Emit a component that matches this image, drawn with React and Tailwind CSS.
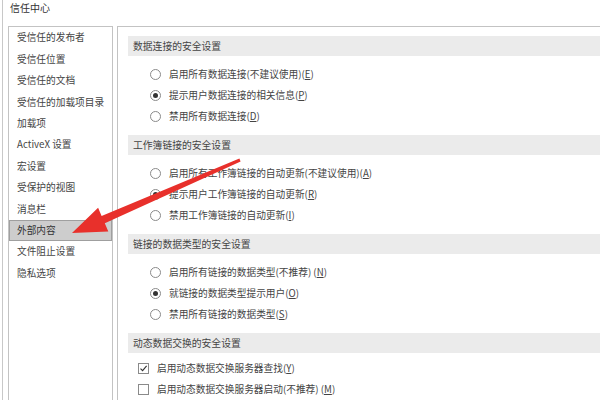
import React from 'react';

const menu = [
  '受信任的发布者',
  '受信任位置',
  '受信任的文档',
  '受信任的加载项目录',
  '加载项',
  'ActiveX 设置',
  '宏设置',
  '受保护的视图',
  '消息栏',
  '外部内容',
  '文件阻止设置',
  '隐私选项',
];

const sections = [
  {
    title: '数据连接的安全设置',
    type: 'radio',
    items: [
      ['启用所有数据连接(不建议使用)(', 'E', ')'],
      ['提示用户数据连接的相关信息(', 'P', ')'],
      ['禁用所有数据连接(', 'D', ')'],
    ],
    checked: 1,
  },
  {
    title: '工作簿链接的安全设置',
    type: 'radio',
    items: [
      ['启用所有工作簿链接的自动更新(不建议使用)(', 'A', ')'],
      ['提示用户工作簿链接的自动更新(', 'R', ')'],
      ['禁用工作簿链接的自动更新(', 'I', ')'],
    ],
    checked: 1,
  },
  {
    title: '链接的数据类型的安全设置',
    type: 'radio',
    items: [
      ['启用所有链接的数据类型(不推荐) (', 'N', ')'],
      ['就链接的数据类型提示用户(', 'O', ')'],
      ['禁用所有链接的数据类型(', 'S', ')'],
    ],
    checked: 1,
  },
  {
    title: '动态数据交换的安全设置',
    type: 'check',
    items: [
      ['启用动态数据交换服务器查找(', 'Y', ')'],
      ['启用动态数据交换服务器启动(不推荐) (', 'M', ')'],
    ],
    checked: 0,
  },
];

const Radio = ({ on }) => (
  <span className="w-[11px] h-[11px] rounded-full border border-[#8a8a8a] bg-white flex items-center justify-center shrink-0">
    {on && <span className="w-[5px] h-[5px] rounded-full bg-[#333]" />}
  </span>
);

const Check = ({ on }) => (
  <span className="w-[11px] h-[11px] border border-[#8a8a8a] bg-white flex items-center justify-center shrink-0">
    {on && (
      <svg width="9" height="9" viewBox="0 0 9 9">
        <path d="M1.5 4.6 L3.6 6.7 L7.6 1.8" fill="none" stroke="#333" strokeWidth="1.1" />
      </svg>
    )}
  </span>
);

export default function App() {
  return (
    <div
      className="relative w-[600px] h-[400px] overflow-hidden bg-white text-[#444]"
      style={{ fontFamily: '"Noto Sans CJK SC", "Noto Sans", sans-serif' }}
    >
      <div className="ml-[2px] h-full border-l border-[#c8c8c8] flex flex-col">
        {/* 标题 */}
        <div className="h-[27px] pl-[7px] text-[10px] leading-[16px] text-[#333]">信任中心</div>

        <div className="flex flex-1 pl-[5px]">
          {/* 左侧菜单 */}
          <div className="w-[105px] border border-b-0 border-[#c3c3c3] text-[9.7px]">
            {menu.map((m) => (
              <div
                key={m}
                className={
                  m === '外部内容'
                    ? 'h-[21.4px] flex items-center pl-[7px] bg-[#cdcdcd] border border-[#9f9f9f] text-[#333]'
                    : 'h-[21.4px] flex items-center pl-[8px]'
                }
              >
                {m}
              </div>
            ))}
          </div>

          {/* 右侧设置 */}
          <div className="flex-1 ml-[4px] border-l border-t border-[#c3c3c3] pt-[9px] pl-[10px]">
            {sections.map((s) => (
              <div key={s.title}>
                <div className="h-[20px] bg-[#ebebeb] flex items-center pl-[5px] text-[9.8px] text-[#444]">
                  {s.title}
                </div>
                <div className={s.type === 'radio' ? 'mt-[8px] mb-[8px] pl-[22px]' : 'mt-[5px] pl-[10px]'}>
                  {s.items.map((it, i) => (
                    <div key={i} className="h-[21px] flex items-center gap-[8px] text-[9.7px]">
                      {s.type === 'radio' ? <Radio on={i === s.checked} /> : <Check on={i === s.checked} />}
                      <span>
                        {it[0]}
                        <span className="underline">{it[1]}</span>
                        {it[2]}
                      </span>
                    </div>
                  ))}
                </div>
              </div>
            ))}
          </div>
        </div>
      </div>

      {/* 红色箭头 */}
      <svg className="absolute left-0 top-0 pointer-events-none" width="600" height="400" viewBox="0 0 600 400">
        <polygon
          points="239.4,158.6 101.6,215.9 98.1,207.7 72,233 108.3,231.5 104.8,223.3 240.6,161.4"
          fill="#e8302b"
        />
      </svg>
    </div>
  );
}
